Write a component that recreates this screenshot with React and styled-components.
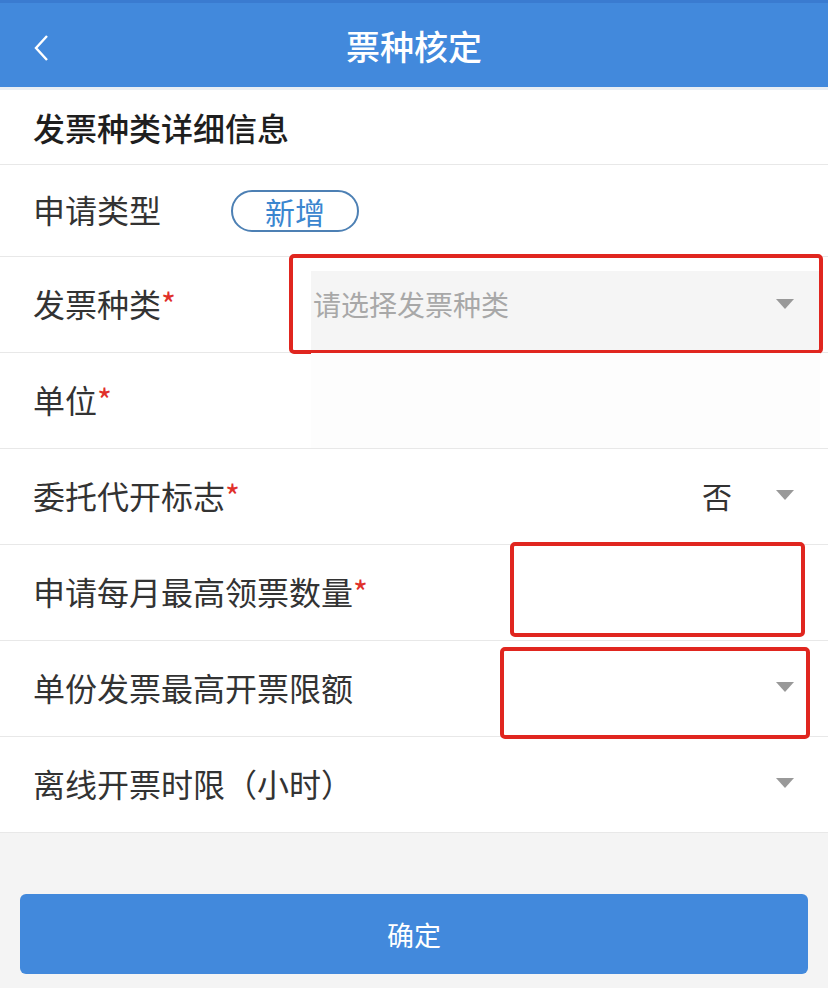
import React from 'react';
import styled, { createGlobalStyle } from 'styled-components';

const GlobalStyle = createGlobalStyle`
  body {
    margin: 0;
    background: #f4f4f4;
    font-family: "Noto Sans CJK SC", "Noto Sans", sans-serif;
  }
`;

const Page = styled.div`
  width: 828px;
  min-height: 988px;
  background: #f4f4f4;
`;

const Header = styled.div`
  height: 84px;
  background: #4289dc;
  border-top: 3px solid #3a7bd0;
  display: flex;
  align-items: center;
  justify-content: center;
  position: relative;
  color: #fff;
  font-size: 34px;
  font-weight: 500;
  box-shadow: 0 3px 0 #e9eef4;
`;

const Back = styled.svg`
  position: absolute;
  left: 32px;
  top: 30px;
`;

const Form = styled.div`
  margin-top: 3px;
  background: #fff;
`;

const SectionTitle = styled.div`
  height: 74px;
  display: flex;
  align-items: center;
  padding-left: 33px;
  font-size: 32px;
  font-weight: 500;
  color: #1e1e1e;
  border-bottom: 1px solid #e8e8e8;
`;

const Row = styled.div`
  position: relative;
  height: ${p => p.h || 95}px;
  display: flex;
  align-items: center;
  padding: 0 8px 0 33px;
  border-bottom: 1px solid #e8e8e8;
`;

const Label = styled.div`
  width: 278px;
  flex-shrink: 0;
  font-size: 32px;
  color: #333;
  white-space: nowrap;
  padding-bottom: 4px;
`;

const Star = styled.span`
  color: #e0302a;
`;

const Pill = styled.div`
  margin-left: -80px;
  width: 124px;
  height: 38px;
  border: 2px solid #4d80b4;
  border-radius: 21px;
  display: flex;
  align-items: center;
  justify-content: center;
  color: #3b86cf;
  font-size: 30px;
`;

const Field = styled.div`
  flex: 1;
  align-self: stretch;
  margin: ${p => (p.filled ? '14px 0 2px 0' : '0')};
  padding: ${p => (p.filled ? '0 26px 14px 2px' : '0 26px 4px 2px')};
  background: ${p => (p.filled ? '#f5f5f5' : p.faint ? '#fdfdfd' : 'transparent')};
  display: flex;
  align-items: center;
`;

const Placeholder = styled.div`
  flex: 1;
  font-size: 28px;
  color: #a8a8a8;
`;

const Value = styled.div`
  flex: 1;
  text-align: right;
  padding-right: 44px;
  font-size: 30px;
  color: #333;
`;

const Arrow = styled.div`
  width: 0;
  height: 0;
  border-left: 9px solid transparent;
  border-right: 9px solid transparent;
  border-top: 10px solid #999;
`;

const Mark = styled.div`
  position: absolute;
  border: 4px solid #e0261f;
  border-radius: 5px;
  pointer-events: none;
`;

const Footer = styled.div`
  padding: 61px 20px 14px;
`;

const Button = styled.div`
  height: 80px;
  border-radius: 6px;
  background: #4289dc;
  color: #fff;
  font-size: 27px;
  display: flex;
  align-items: center;
  justify-content: center;
`;

export default function App() {
  return (
    <Page>
      <GlobalStyle />
      <Header>
        <Back width="18" height="30" viewBox="0 0 18 30">
          <path d="M15 3 L4 15 L15 27" fill="none" stroke="#fff" strokeWidth="2.4" />
        </Back>
        票种核定
      </Header>
      <Form>
        <SectionTitle>发票种类详细信息</SectionTitle>
        <Row h={91}>
          <Label>申请类型</Label>
          <Pill>新增</Pill>
        </Row>
        <Row>
          <Label>
            发票种类<Star>*</Star>
          </Label>
          <Field filled>
            <Placeholder>请选择发票种类</Placeholder>
            <Arrow />
          </Field>
          <Mark style={{ left: 289, top: -3, width: 526, height: 92 }} />
        </Row>
        <Row>
          <Label>
            单位<Star>*</Star>
          </Label>
          <Field faint />
        </Row>
        <Row>
          <Label>
            委托代开标志<Star>*</Star>
          </Label>
          <Field>
            <Value>否</Value>
            <Arrow />
          </Field>
        </Row>
        <Row>
          <Label>
            申请每月最高领票数量<Star>*</Star>
          </Label>
          <Mark style={{ left: 510, top: -3, width: 287, height: 87 }} />
        </Row>
        <Row>
          <Label>单份发票最高开票限额</Label>
          <Field>
            <Placeholder />
            <Arrow />
          </Field>
          <Mark style={{ left: 500, top: 6, width: 302, height: 84 }} />
        </Row>
        <Row>
          <Label>离线开票时限（小时）</Label>
          <Field>
            <Placeholder />
            <Arrow />
          </Field>
        </Row>
      </Form>
      <Footer>
        <Button>确定</Button>
      </Footer>
    </Page>
  );
}
